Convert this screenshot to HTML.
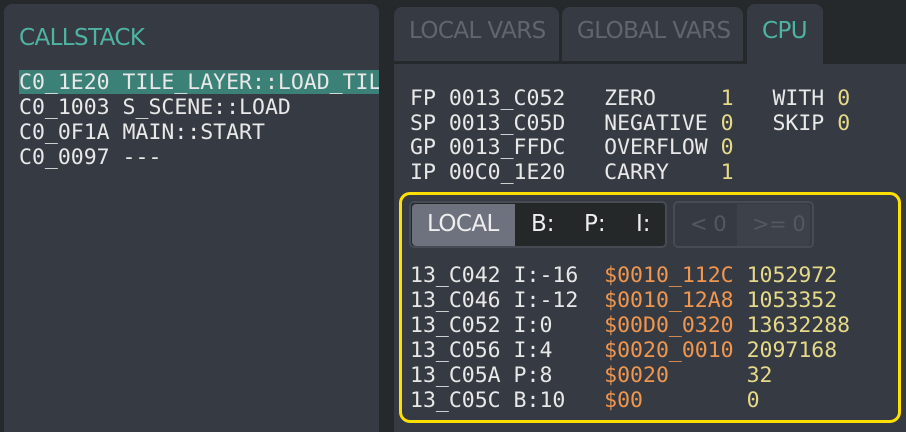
<!DOCTYPE html>
<html><head><style>
*{margin:0;padding:0;box-sizing:border-box}
html,body{width:906px;height:432px;overflow:hidden}
body{background:#26292b;position:relative;font-family:"DejaVu Sans","Liberation Sans",sans-serif}
.mono{font-family:"DejaVu Sans Mono","Liberation Mono",monospace;font-size:21.5px;white-space:pre;color:#e8e8e8;position:absolute;line-height:25px}
.abs{position:absolute}
.y{color:#e6d98a}.o{color:#f0964f}
</style></head><body>
<div class="abs" style="left:4px;top:4px;width:375px;height:428px;background:#363b43;border-radius:8px 8px 0 0"></div>
<div class="abs" style="left:19px;top:25px;font-size:23px;color:#4fb3a3;letter-spacing:-0.6px">CALLSTACK</div>
<div class="abs" style="left:19px;top:70px;width:360px;height:24px;background:#3b8177"></div>
<div class="mono" style="left:19px;top:70px;width:360px;overflow:hidden">C0_1E20 TILE_LAYER::LOAD_TILES
C0_1003 S_SCENE::LOAD
C0_0F1A MAIN::START
C0_0097 ---</div>

<div class="abs" style="left:394px;top:7px;width:165px;height:54px;background:#363b43;border-radius:8px 8px 0 0"></div>
<div class="abs" style="left:562px;top:7px;width:181px;height:54px;background:#363b43;border-radius:8px 8px 0 0"></div>
<div class="abs" style="left:747px;top:4px;width:76px;height:62px;background:#363b43;border-radius:8px 8px 0 0"></div>
<div class="abs" style="left:409px;top:18px;font-size:23px;color:#60656f;letter-spacing:-0.6px">LOCAL VARS</div>
<div class="abs" style="left:577px;top:18px;font-size:23px;color:#60656f;letter-spacing:-0.6px">GLOBAL VARS</div>
<div class="abs" style="left:762px;top:18px;font-size:23px;color:#4fb3a3;letter-spacing:-0.6px">CPU</div>
<div class="abs" style="left:394px;top:64px;width:512px;height:368px;background:#363b43"></div>

<div class="mono" style="left:410px;top:87px;line-height:24.6px">FP 0013_C052   ZERO     <span class="y">1</span>   WITH <span class="y">0</span>
SP 0013_C05D   NEGATIVE <span class="y">0</span>   SKIP <span class="y">0</span>
GP 0013_FFDC   OVERFLOW <span class="y">0</span>
IP 00C0_1E20   CARRY    <span class="y">1</span></div>

<div class="abs" style="left:399px;top:192px;width:502px;height:231px;border:3px solid #ffe000;border-radius:11px"></div>
<div class="abs" style="left:409px;top:201px;width:258px;height:47px;background:#252829;border:2px solid #474b54;border-radius:5px"></div>
<div class="abs" style="left:412px;top:204px;width:103px;height:42px;background:#6e717e;border-radius:4px 0 0 4px"></div>
<div class="abs" style="left:427px;top:211px;font-size:23px;color:#eee;letter-spacing:-0.6px">LOCAL</div>
<div class="abs" style="left:531px;top:211px;font-size:23px;color:#eee">B:</div>
<div class="abs" style="left:584px;top:211px;font-size:23px;color:#eee">P:</div>
<div class="abs" style="left:636px;top:211px;font-size:23px;color:#eee">I:</div>
<div class="abs" style="left:673px;top:201px;width:141px;height:47px;background:#363b43;border:2px solid #474b54;border-radius:5px"></div>
<div class="abs" style="left:737px;top:204px;width:73px;height:42px;background:#3d4149;border-radius:0 4px 4px 0"></div>
<div class="abs" style="left:690px;top:212px;font-size:21px;color:#545861;letter-spacing:-0.5px">&lt; 0</div>
<div class="abs" style="left:752px;top:212px;font-size:21px;color:#545861;letter-spacing:-0.5px">&gt;= 0</div>

<div class="mono" style="left:410px;top:263px;line-height:25px">13_C042 I:-16  <span class="o">$0010_112C</span> <span class="y">1052972</span>
13_C046 I:-12  <span class="o">$0010_12A8</span> <span class="y">1053352</span>
13_C052 I:0    <span class="o">$00D0_0320</span> <span class="y">13632288</span>
13_C056 I:4    <span class="o">$0020_0010</span> <span class="y">2097168</span>
13_C05A P:8    <span class="o">$0020</span>      <span class="y">32</span>
13_C05C B:10   <span class="o">$00</span>        <span class="y">0</span></div>
</body></html>
